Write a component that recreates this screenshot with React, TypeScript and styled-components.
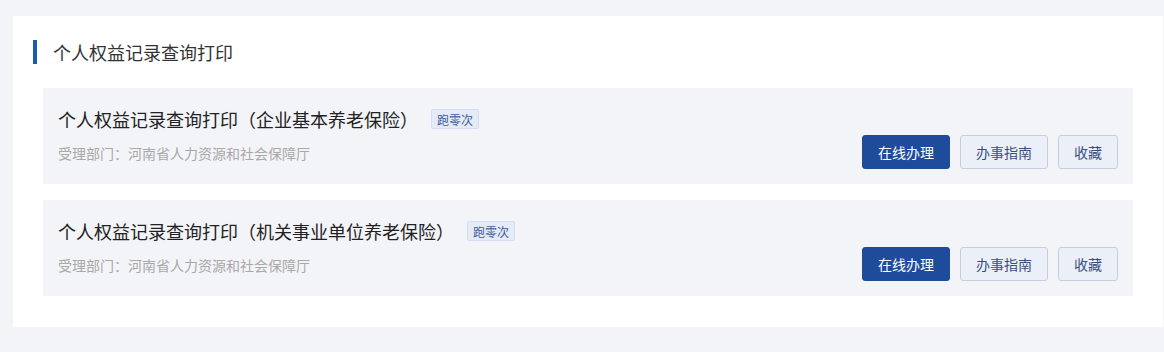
import React from "react";
import styled, { createGlobalStyle } from "styled-components";

const Global = createGlobalStyle`
  html, body { margin: 0; padding: 0; background: #f3f4f7; }
  body { font-family: "Microsoft YaHei", "Noto Sans CJK SC", "Noto Sans", sans-serif; }
  * { box-sizing: border-box; }
`;

const Page = styled.div`
  padding: 16px 1px 26px 13px;
  width: 1164px;
`;

const Panel = styled.section`
  background: #fff;
  padding: 24px 30px 31px 20px;
`;

const SectionTitle = styled.h2`
  margin: 0 0 24px 0;
  display: flex;
  align-items: center;
  height: 24px;
  font-size: 18px;
  font-weight: 400;
  color: #333;
  &::before {
    content: "";
    width: 4px;
    height: 24px;
    background: #1a5bb0;
    margin-right: 16px;
  }
`;

const List = styled.div`
  display: flex;
  flex-direction: column;
  gap: 16px;
  padding-left: 10px;
`;

const Card = styled.div`
  background: #f3f4f8;
  height: 96px;
  padding: 0 15px;
  display: flex;
  justify-content: space-between;
  align-items: flex-start;
`;

const Info = styled.div`
  display: flex;
  flex-direction: column;
  padding-top: 19px;
`;

const TitleRow = styled.div`
  display: flex;
  align-items: center;
  height: 24px;
`;

const CardTitle = styled.span`
  font-size: 18px;
  color: #222;
`;

const Badge = styled.span`
  margin-left: 13px;
  height: 20px;
  padding: 0 5px;
  display: inline-flex;
  align-items: center;
  font-size: 12px;
  color: #3d5a99;
  background: #e5ebf6;
  border: 1px solid #d5def0;
  border-radius: 2px;
`;

const Dept = styled.div`
  margin-top: 12px;
  font-size: 14px;
  color: #a8a8a8;
  line-height: 20px;
`;

const Actions = styled.div`
  display: flex;
  gap: 10px;
  padding-top: 47px;
`;

const Button = styled.button<{ $primary?: boolean; $w: number }>`
  width: ${(p) => p.$w}px;
  height: 34px;
  border-radius: 3px;
  font-family: inherit;
  font-size: 14px;
  cursor: pointer;
  padding: 0;
  border: 1px solid ${(p) => (p.$primary ? "#1f4b9b" : "#c5cddd")};
  background: ${(p) => (p.$primary ? "#1f4b9b" : "#ebf0f8")};
  color: ${(p) => (p.$primary ? "#fff" : "#3b4f7e")};
`;

const items = [
  "个人权益记录查询打印（企业基本养老保险）",
  "个人权益记录查询打印（机关事业单位养老保险）",
];

export default function App() {
  return (
    <>
      <Global />
      <Page>
        <Panel>
          <SectionTitle>个人权益记录查询打印</SectionTitle>
          <List>
            {items.map((t) => (
              <Card key={t}>
                <Info>
                  <TitleRow>
                    <CardTitle>{t}</CardTitle>
                    <Badge>跑零次</Badge>
                  </TitleRow>
                  <Dept>受理部门：河南省人力资源和社会保障厅</Dept>
                </Info>
                <Actions>
                  <Button $primary $w={88}>在线办理</Button>
                  <Button $w={88}>办事指南</Button>
                  <Button $w={60}>收藏</Button>
                </Actions>
              </Card>
            ))}
          </List>
        </Panel>
      </Page>
    </>
  );
}
